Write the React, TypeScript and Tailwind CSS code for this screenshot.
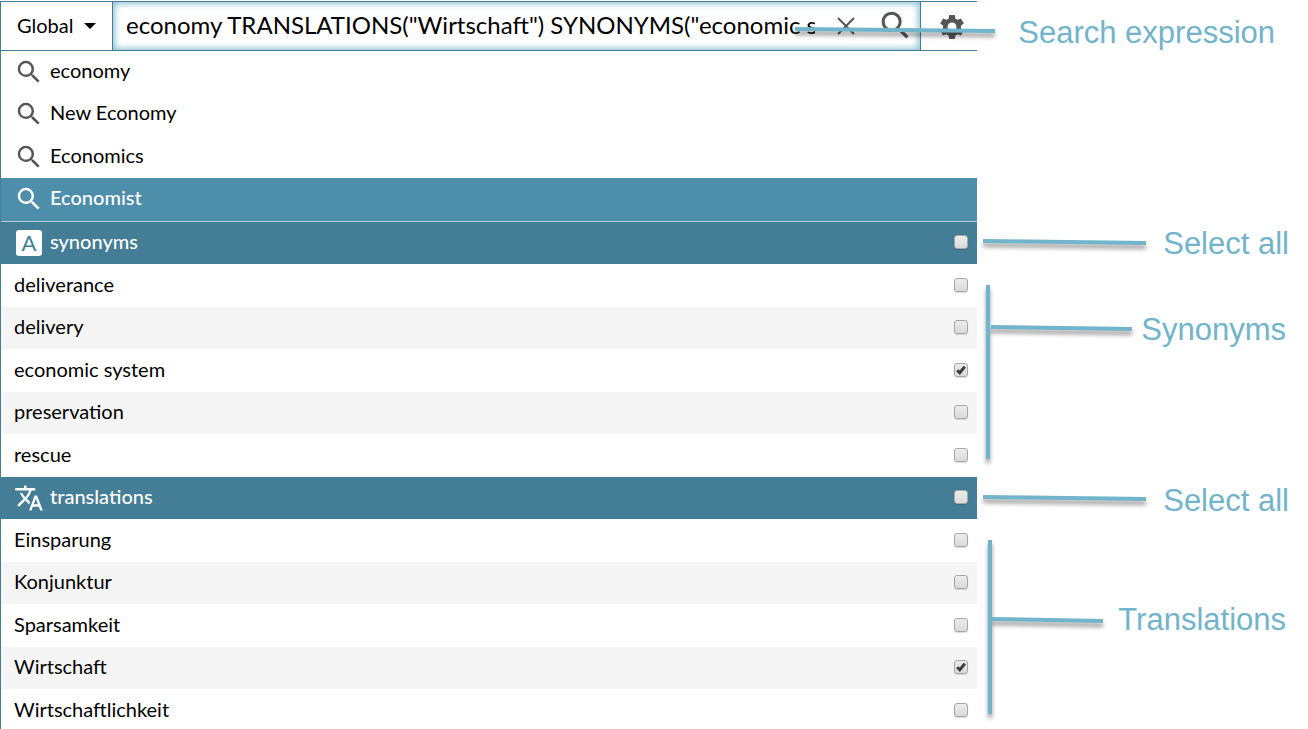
import { useState } from "react";
import { MdSearch, MdSettings, MdTranslate } from "react-icons/md";

const suggestions = ["economy", "New Economy", "Economics", "Economist"];
const synonyms = ["deliverance", "delivery", "economic system", "preservation", "rescue"];
const translations = ["Einsparung", "Konjunktur", "Sparsamkeit", "Wirtschaft", "Wirtschaftlichkeit"];

type CheckProps = {
  id: string;
  checked: boolean;
  onChange: () => void;
};

function Check({ id, checked, onChange }: CheckProps) {
  return (
    <span className="mb-0.5 grid h-3.5 w-3.5">
      <input
        id={id}
        type="checkbox"
        checked={checked}
        onChange={onChange}
        className="col-start-1 row-start-1 h-3.5 w-3.5 appearance-none rounded-[3px] border border-[#a6a6a6] bg-linear-to-b from-[#ececec] to-[#dadada] shadow-[0_1px_1px_rgba(0,0,0,0.15)]"
      />
      {checked && (
        <svg viewBox="0 0 14 14" className="pointer-events-none col-start-1 row-start-1 h-3.5 w-3.5">
          <path d="M3.2 7.2 5.8 9.8 10.8 3.6" fill="none" stroke="#3c3c3c" strokeWidth="3" />
        </svg>
      )}
    </span>
  );
}

type SectionProps = {
  title: string;
  icon: React.ReactNode;
  words: string[];
  selected: string[];
  setSelected: (words: string[]) => void;
};

function Section({ title, icon, words, selected, setSelected }: SectionProps) {
  const all = words.every((word) => selected.includes(word));

  const toggle = (word: string) => {
    setSelected(selected.includes(word) ? selected.filter((w) => w !== word) : [...selected, word]);
  };

  return (
    <section>
      <div className="flex h-[42px] items-center bg-[#447d96] pr-[9px] pl-[13px] text-white">
        <span className="flex w-9 items-center">{icon}</span>
        <label htmlFor={title} className="flex-1 pb-1 font-medium">
          {title}
        </label>
        <Check id={title} checked={all} onChange={() => setSelected(all ? [] : words)} />
      </div>
      <ul>
        {words.map((word) => (
          <li
            key={word}
            className="flex h-[43px] items-center pr-[9px] pl-[13px] even:h-[42px] even:bg-[#f5f5f5]"
          >
            <label htmlFor={word} className="flex-1 pb-1">
              {word}
            </label>
            <Check id={word} checked={selected.includes(word)} onChange={() => toggle(word)} />
          </li>
        ))}
      </ul>
    </section>
  );
}

// pointer lines, drawn from the left edge of the notes column
function Lines({ shapes }: { shapes: string[] }) {
  return (
    <svg
      width="200"
      height="200"
      className="pointer-events-none absolute top-0 left-0 overflow-visible fill-[#71b4cc] drop-shadow-[0_4px_2px_rgba(0,0,0,0.4)]"
    >
      {shapes.map((points) => (
        <polygon key={points} points={points} />
      ))}
    </svg>
  );
}

export default function App() {
  const [query, setQuery] = useState('economy TRANSLATIONS("Wirtschaft") SYNONYMS("economic system")');
  const [active, setActive] = useState("Economist");
  const [pickedSynonyms, setPickedSynonyms] = useState(["economic system"]);
  const [pickedTranslations, setPickedTranslations] = useState(["Wirtschaft"]);

  return (
    <div className="flex overflow-hidden bg-white pt-px">
      <main className="min-w-0 flex-1 border-l border-[#447d96] font-[Lato,sans-serif] text-[20px] leading-6 text-black">
        <form className="flex h-[50px] border-y border-[#447d96]" onSubmit={(e) => e.preventDefault()}>
          <div className="grid w-[111px] items-center">
            <select
              aria-label="Search scope"
              className="col-start-1 row-start-1 h-full w-full appearance-none bg-transparent pb-0.5 pl-4"
            >
              <option>Global</option>
            </select>
            <svg
              viewBox="0 0 12 6"
              className="pointer-events-none col-start-1 row-start-1 mr-4 h-1.5 w-3 justify-self-end"
            >
              <path d="M0 0h12L6 6z" />
            </svg>
          </div>
          <div className="flex min-w-0 flex-1 items-center border-x border-[#447d96] pr-1.5 pl-[13px] shadow-[inset_0_0_6px_2px_#8fc3d6]">
            <input
              aria-label="Search expression"
              value={query}
              onChange={(e) => setQuery(e.target.value)}
              className="h-10 min-w-0 flex-1 bg-transparent pb-1 text-[24px] outline-none"
            />
            <button type="button" aria-label="Clear" onClick={() => setQuery("")} className="ml-[22px]">
              <svg viewBox="0 0 18 18" className="h-[18px] w-[18px]">
                <path d="M1 1l16 16M17 1L1 17" stroke="#555" strokeWidth="2" />
              </svg>
            </button>
            <button type="submit" aria-label="Search" className="mb-0.5 ml-[22px]">
              <MdSearch className="h-[37px] w-[37px] text-[#555]" />
            </button>
          </div>
          <button type="button" aria-label="Settings" className="flex w-14 items-center pt-0.5 pl-4">
            <MdSettings className="h-[30px] w-[30px] text-[#555]" />
          </button>
        </form>

        <ul>
          {suggestions.map((word) => (
            <li
              key={word}
              className={
                word === active
                  ? "h-[42px] bg-[#4d8eab] font-medium text-white even:h-[43px]"
                  : "h-[42px] text-black even:h-[43px]"
              }
            >
              <button
                type="button"
                onClick={() => setActive(word)}
                className="flex h-[42px] w-full items-center pl-[13px] text-left"
              >
                <MdSearch className={word === active ? "h-[30px] w-[30px]" : "h-[30px] w-[30px] text-[#555]"} />
                <span className="pb-1 pl-1.5">{word}</span>
              </button>
            </li>
          ))}
        </ul>

        <div className="border-t border-[#b5ced8]">
          <Section
            title="synonyms"
            icon={
              <span className="ml-0.5 flex h-[26px] w-[26px] items-center justify-center rounded-[3px] bg-white text-[22px] text-[#447d96]">
                A
              </span>
            }
            words={synonyms}
            selected={pickedSynonyms}
            setSelected={setPickedSynonyms}
          />
          <Section
            title="translations"
            icon={<MdTranslate className="h-[30px] w-[30px]" />}
            words={translations}
            selected={pickedTranslations}
            setSelected={setPickedTranslations}
          />
        </div>
      </main>

      <aside className="w-[331px] shrink-0 text-right font-['Liberation_Sans',Arial,sans-serif] text-[31px] leading-10 text-[#71b4cc]">
        <div className="relative h-[221px] pt-3 pr-[33px]">
          <Lines shapes={["-182,26 18,28 18,32 -182,30"]} />
          Search expression
        </div>
        <div className="relative h-[42px] pt-0.5 pr-[19px]">
          <Lines shapes={["6,17 169,19 169,23 6,21"]} />
          Select all
        </div>
        <div className="relative h-[213px] pt-[46px] pr-[22px]">
          <Lines shapes={["9,21 13,21 13,195 9,195", "14,61 155,63 155,67 14,65"]} />
          Synonyms
        </div>
        <div className="relative h-[42px] pt-1 pr-[19px]">
          <Lines shapes={["6,18 169,20 169,24 6,22"]} />
          Select all
        </div>
        <div className="relative pt-[81px] pr-[22px]">
          <Lines shapes={["11,21 15,21 15,195 11,195", "13,98 126,100 126,104 13,102"]} />
          Translations
        </div>
      </aside>
    </div>
  );
}
